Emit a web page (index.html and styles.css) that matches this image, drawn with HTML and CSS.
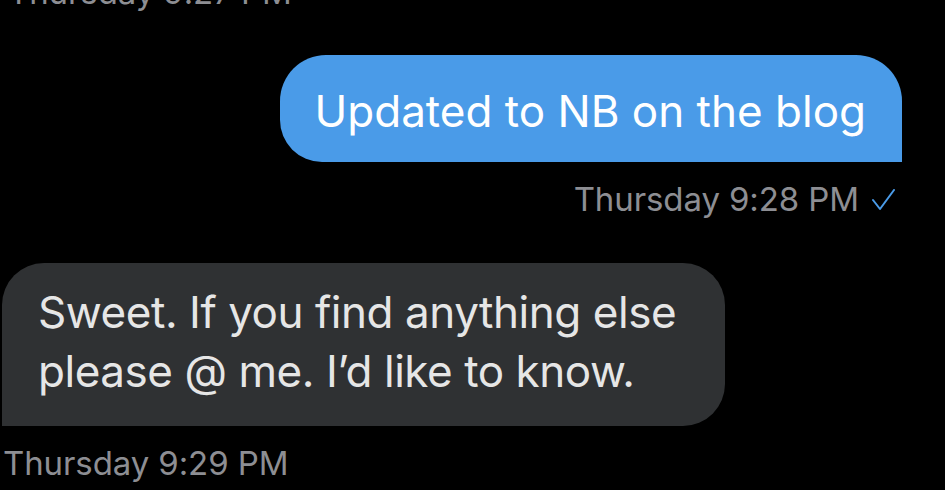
FILE: index.html
```html
<!DOCTYPE html>
<html lang="en">
<head>
<meta charset="utf-8">
<title>Messages</title>
<link rel="stylesheet" href="styles.css">
</head>
<body>
<main class="thread">
  <div class="stamp stamp-first">Thursday 9:27 PM</div>

  <div class="row row-out">
    <div class="bubble bubble-out">Updated to NB on the blog</div>
  </div>
  <div class="stamp stamp-out">
    <span>Thursday 9:28 PM</span>
    <svg class="check" width="24" height="22" viewBox="0 0 24 22" aria-hidden="true">
      <path d="M1 11 L8 20 L22 1" fill="none" stroke="#4a9be8" stroke-width="2" stroke-linecap="round" stroke-linejoin="round"/>
    </svg>
  </div>

  <div class="row row-in">
    <div class="bubble bubble-in">Sweet. If you find anything else<br>please @ me. I’d like to know.</div>
  </div>
  <div class="stamp stamp-in">Thursday 9:29 PM</div>
</main>
</body>
</html>
```

FILE: styles.css
```css
html, body {
  margin: 0;
  padding: 0;
  background: #000;
}

body {
  font-family: Inter, "Noto Sans", sans-serif;
  overflow: hidden;
}

.thread {
  display: flex;
  flex-direction: column;
}

.stamp {
  font-size: 33px;
  line-height: 40px;
  color: #8d8e93;
  white-space: nowrap;
  letter-spacing: -0.1px;
}

.stamp-first {
  margin-top: -28px;
  padding-left: 8px;
}

.stamp-in {
  padding-left: 3px;
  margin-top: 17px;
}

.stamp-out {
  display: flex;
  justify-content: flex-end;
  align-items: center;
  gap: 13px;
  padding-right: 49px;
  margin-top: 17px;
}

.check {
  display: block;
  margin-top: 2px;
}

.row {
  display: flex;
}

.row-out {
  justify-content: flex-end;
  padding-right: 43px;
  margin-top: 43px;
}

.row-in {
  justify-content: flex-start;
  padding-left: 2px;
  margin-top: 44px;
}

.bubble {
  font-size: 44px;
  white-space: nowrap;
}

.bubble-out {
  background: #4a9be8;
  color: #fff;
  border-radius: 46px 46px 0 42px;
  padding: 5px 36px 0 35px;
  line-height: 102px;
}

.bubble-in {
  background: #2f3133;
  color: #e6e6e6;
  border-radius: 42px 42px 42px 0;
  width: 723px;
  box-sizing: border-box;
  padding: 20px 20px 25px 36px;
  line-height: 59px;
  letter-spacing: -0.45px;
}
```
